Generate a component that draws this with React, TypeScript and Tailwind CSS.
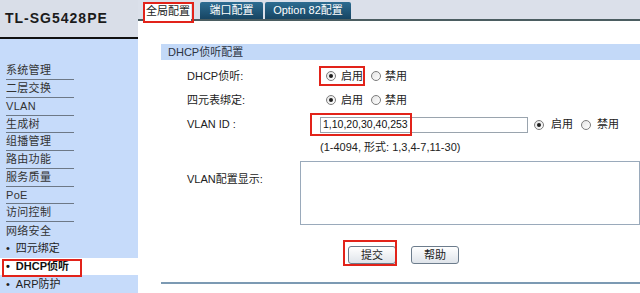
const menu = [
  "系统管理",
  "二层交换",
  "VLAN",
  "生成树",
  "组播管理",
  "路由功能",
  "服务质量",
  "PoE",
  "访问控制",
];

function Radio({ checked }: { checked?: boolean }) {
  return (
    <span className="flex h-[10px] w-[10px] items-center justify-center rounded-full border border-[#7c7c7c] bg-gradient-to-br from-[#e4e4e4] to-white">
      {checked && <span className="h-[4px] w-[4px] rounded-full bg-[#1e1e1e]" />}
    </span>
  );
}

function RadioPair({ boxed }: { boxed?: boolean }) {
  return (
    <div className="flex items-center">
      <span
        className={
          "ml-[1px] flex h-[20px] items-center gap-[5px] border-2 pl-[5px] " +
          (boxed ? "border-[#e2231a]" : "border-transparent")
        }
      >
        <Radio checked />
        <span>启用</span>
      </span>
      <span className="ml-[6px] flex items-center gap-[4px]">
        <Radio />
        <span>禁用</span>
      </span>
    </div>
  );
}

function Button({ label, boxed }: { label: string; boxed?: boolean }) {
  return (
    <div className="relative">
      <button className="h-[18px] w-[48px] rounded-[3px] border border-[#6c7c8c] bg-gradient-to-b from-white to-[#dfe4ea] text-[11px] leading-[16px] text-[#222]">
        {label}
      </button>
      {boxed && (
        <span className="absolute -left-[5px] -top-[6px] h-[26px] w-[54px] border-2 border-[#e2231a]" />
      )}
    </div>
  );
}

export default function App() {
  return (
    <div className="flex h-[293px] w-[640px] overflow-hidden bg-white font-[Liberation_Sans,Noto_Sans_CJK_SC,sans-serif] text-[11px] text-[#222]">
      {/* left menu */}
      <div className="flex w-[138px] shrink-0 flex-col">
        <div className="flex h-[38px] items-center bg-[#d9dee8] pl-[5px] text-[14px] font-bold tracking-[1px] text-[#1b1b1b]">
          TL-SG5428PE
        </div>
        <div className="h-[2px] bg-[#111]" />
        <div className="flex-1 bg-[#c6dbfa] pt-[23px] text-[#333]">
          {menu.map((m) => (
            <div key={m} className="h-[17.75px] pl-[6px]">
              <div className="flex h-full w-[68px] items-center border-b border-[#6d7886] tracking-[0.3px]">
                {m}
              </div>
            </div>
          ))}
          <div className="flex h-[17.75px] items-center pl-[6px] tracking-[0.3px]">网络安全</div>
          <div className="flex h-[17.75px] items-center gap-[6px] pl-[6px] text-[#222]">
            <span>•</span>
            <span>四元绑定</span>
          </div>
          <div className="relative flex h-[17.75px] items-center gap-[6px] bg-white pl-[6px] font-bold text-[#111]">
            <span>•</span>
            <span>DHCP侦听</span>
            <span className="absolute left-[2px] top-[1px] h-[18px] w-[80px] border-2 border-[#e2231a]" />
          </div>
          <div className="flex h-[17.75px] items-center gap-[6px] pl-[6px] text-[#222]">
            <span>•</span>
            <span>ARP防护</span>
          </div>
        </div>
      </div>

      {/* right content */}
      <div className="flex min-w-0 flex-1 flex-col">
        <div className="relative flex h-[21px] items-end border-b-2 border-[#4b5d61] bg-[#dbe0ea] pl-[7px]">
          <div className="-mb-[2px] flex h-[19px] w-[46px] items-center justify-center bg-white text-[#222]">
            全局配置
          </div>
          <div className="ml-[9px] flex h-[17px] w-[63px] items-center justify-center rounded-t-[2px] bg-gradient-to-b from-[#2d6d92] to-[#174563] text-white">
            端口配置
          </div>
          <div className="ml-[2px] flex h-[17px] w-[86px] items-center justify-center rounded-t-[2px] bg-gradient-to-b from-[#2d6d92] to-[#174563] text-white">
            Option 82配置
          </div>
          <span className="absolute left-[5px] top-[2px] h-[21px] w-[51px] border-2 border-[#e2231a]" />
        </div>

        <div className="pl-[23px] pt-[23px]">
          <div className="h-[16px] bg-[#c3d9f8] pl-[7px] leading-[16px] text-[#2b3442]">
            DHCP侦听配置
          </div>

          <div className="mt-[4px] pl-[26px]">
            <div className="flex h-[24px] items-center">
              <div className="w-[131px]">DHCP侦听:</div>
              <RadioPair boxed />
            </div>
            <div className="flex h-[24px] items-center">
              <div className="w-[131px]">四元表绑定:</div>
              <RadioPair />
            </div>
            <div className="flex h-[25px] items-center">
              <div className="w-[131px]">VLAN ID :</div>
              <div className="relative ml-[2px]">
                <div className="flex h-[16px] w-[208px] items-center border border-[#9aa4ae] pl-[2px] text-[10.5px] text-[#111]">
                  1,10,20,30,40,253
                </div>
                <span className="absolute -left-[10px] -top-[4px] h-[23px] w-[102px] border-2 border-[#e2231a]" />
              </div>
              <span className="ml-[6px] flex items-center gap-[7px]">
                <Radio checked />
                <span>启用</span>
              </span>
              <span className="ml-[8px] flex items-center gap-[6px]">
                <Radio />
                <span>禁用</span>
              </span>
            </div>
            <div className="flex h-[20px] items-center">
              <div className="w-[131px]" />
              <div className="ml-[2px]">(1-4094, 形式: 1,3,4-7,11-30)</div>
            </div>
            <div className="flex items-start pt-[4px]">
              <div className="mt-[10px] w-[131px]">VLAN配置显示:</div>
              <div className="ml-[4px] h-[64px] w-[340px] shrink-0 border border-[#9aaabb]" />
            </div>
            <div className="mt-[21px] flex pl-[161px]">
              <Button label="提交" boxed />
              <div className="ml-[15px]">
                <Button label="帮助" />
              </div>
            </div>
          </div>

          <div className="mt-[18px] h-[2px] bg-[#7c9ab3]" />
        </div>
      </div>
    </div>
  );
}
